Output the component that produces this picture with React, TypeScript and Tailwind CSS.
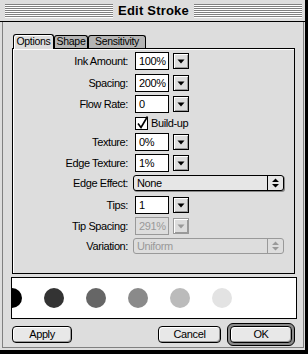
import React from 'react';

const labelFont = "font-['Liberation_Sans',Arial,sans-serif] text-[11px] tracking-[-0.4px] text-black";

const Stripes: React.FC = () => (
    <div className="flex flex-1 flex-col">
        {[0, 1, 2, 3, 4, 5, 6].map((i) => (
            <div key={i} className="h-[2px] border-b border-b-white bg-[#808080]" />
        ))}
    </div>
);

const DropButton: React.FC<{ disabled?: boolean }> = ({ disabled }) => (
    <div
        className={`ml-[4px] flex h-[16px] w-[16px] items-center justify-center border bg-[#dddddd] shadow-[inset_1px_1px_0_#fff,inset_-1px_-1px_0_#999] ${disabled ? 'border-[#999999]' : 'border-black'
            }`}
    >
        <svg width="8" height="5" viewBox="0 0 8 5">
            <path d="M0.5 0.5h7L4 4.5z" fill={disabled ? '#999999' : '#000000'} />
        </svg>
    </div>
);

const Field: React.FC<{ value: string; disabled?: boolean }> = ({ value, disabled }) => (
    <div
        className={`flex h-[18px] w-[34px] items-center border pl-[3px] ${disabled ? 'border-[#999999] bg-[#dddddd] text-[#999999]' : 'border-black bg-white text-black'
            }`}
    >
        {value}
    </div>
);

const Popup: React.FC<{ value: string; disabled?: boolean }> = ({ value, disabled }) => (
    <div
        className={`-ml-[2px] flex h-[16px] w-[151px] items-center rounded-[3px] border ${disabled ? 'border-[#999999] text-[#999999]' : 'border-black bg-[#e6e6e6] text-black shadow-[1px_1px_0_#888]'
            }`}
    >
        <span className="flex-1 pl-[3px]">{value}</span>
        <div
            className={`flex h-full w-[16px] items-center justify-center border-l ${disabled ? 'border-[#999999]' : 'border-black'
                }`}
        >
            <svg width="7" height="10" viewBox="0 0 7 10">
                <path d="M0 4h7L3.5 0.5zM0 6h7L3.5 9.5z" fill={disabled ? '#999999' : '#000000'} />
            </svg>
        </div>
    </div>
);

const Row: React.FC<{ label: string; className: string; children: React.ReactNode }> = ({ label, className, children }) => (
    <div className={`flex items-center ${className}`}>
        <div className="w-[115px] text-right">{label}</div>
        <div className="ml-[7px] flex items-center">{children}</div>
    </div>
);

const PushButton: React.FC<{ label: string; className: string }> = ({ label, className }) => (
    <div
        className={`flex h-[17px] items-center justify-center rounded-[4px] border border-black bg-[#e8e8e8] shadow-[inset_1px_1px_0_#fff,inset_-1px_-1px_0_#9a9a9a] ${className}`}
    >
        {label}
    </div>
);

const App: React.FC = () => {
    const dots = ['bg-black', 'bg-[#333333]', 'bg-[#666666]', 'bg-[#8a8a8a]', 'bg-[#bbbbbb]', 'bg-[#e3e3e3]'];

    return (
        <div className={`h-[354px] w-[308px] bg-black ${labelFont}`}>
            <div className="flex h-[350px] w-[305px] flex-col bg-[#dddddd]">
                {/* title bar */}
                <div className="flex h-[22px] items-start border-b border-black pl-[5px] pr-[3px] pt-[4px]">
                    <Stripes />
                    <div className="-mt-[3px] px-[5px] text-[13px] font-bold tracking-[0.2px]">Edit Stroke</div>
                    <Stripes />
                </div>

                {/* body */}
                <div className="ml-[2px] flex h-[326px] w-[302px] flex-col border-x border-b border-[#808080]">
                    {/* tabs */}
                    <div className="relative z-10 ml-[10px] mt-[12px] flex h-[15px] items-start text-[10.5px] tracking-[-0.3px]">
                        <div className="flex h-[15px] w-[41px] items-center justify-center rounded-t-[3px] border border-b-0 border-black bg-[#dddddd] shadow-[inset_1px_1px_0_#fff]">
                            Options
                        </div>
                        <div className="mt-[1px] flex h-[13px] w-[34px] items-center justify-center rounded-t-[3px] border border-b-0 border-black bg-[#b4b4b4]">
                            Shape
                        </div>
                        <div className="mt-[1px] flex h-[13px] w-[58px] items-center justify-center rounded-t-[3px] border border-b-0 border-black bg-[#b4b4b4]">
                            Sensitivity
                        </div>
                    </div>

                    {/* options panel */}
                    <div className="-mt-[1px] ml-[9px] flex h-[226px] w-[283px] flex-col border border-black shadow-[inset_1px_1px_0_#fff]">
                        <Row label="Ink Amount:" className="mt-[3px] h-[18px]">
                            <Field value="100%" />
                            <DropButton />
                        </Row>
                        <Row label="Spacing:" className="mt-[4px] h-[18px]">
                            <Field value="200%" />
                            <DropButton />
                        </Row>
                        <Row label="Flow Rate:" className="mt-[3px] h-[18px]">
                            <Field value="0" />
                            <DropButton />
                        </Row>
                        <Row label="" className="mt-[4px] h-[13px]">
                            <div className="relative h-[13px] w-[13px] border border-black bg-white">
                                <svg className="absolute -top-[2px] left-0" width="13" height="14" viewBox="0 0 13 14">
                                    <path d="M2 7.5L5 11.5L11.5 0.5" stroke="#000" strokeWidth="1.6" fill="none" />
                                </svg>
                            </div>
                            <span className="ml-[3px]">Build-up</span>
                        </Row>
                        <Row label="Texture:" className="mt-[3px] h-[18px]">
                            <Field value="0%" />
                            <DropButton />
                        </Row>
                        <Row label="Edge Texture:" className="mt-[3px] h-[18px]">
                            <Field value="1%" />
                            <DropButton />
                        </Row>
                        <Row label="Edge Effect:" className="mt-[3px] h-[16px]">
                            <Popup value="None" />
                        </Row>
                        <Row label="Tips:" className="mt-[5px] h-[18px]">
                            <Field value="1" />
                            <DropButton />
                        </Row>
                        <Row label="Tip Spacing:" className="mt-[3px] h-[18px]">
                            <Field value="291%" disabled />
                            <DropButton disabled />
                        </Row>
                        <Row label="Variation:" className="mt-[3px] h-[16px]">
                            <Popup value="Uniform" disabled />
                        </Row>
                    </div>

                    {/* preview */}
                    <div className="ml-[8px] mt-[3px] flex h-[42px] w-[286px] items-center gap-[22px] overflow-hidden border border-black bg-white">
                        {dots.map((c, i) => (
                            <div key={i} className={`h-[20px] w-[20px] shrink-0 rounded-full ${c} ${i === 0 ? '-ml-[10px]' : ''}`} />
                        ))}
                    </div>

                    {/* buttons */}
                    <div className="ml-[9px] mt-[3px] flex h-[25px] items-center">
                        <PushButton label="Apply" className="w-[60px]" />
                        <PushButton label="Cancel" className="ml-[86px] w-[63px]" />
                        <div className="ml-[6px] rounded-[6px] border border-black bg-[#8a8a8a] p-[2px]">
                            <PushButton label="OK" className="w-[62px]" />
                        </div>
                    </div>
                </div>
            </div>
        </div>
    );
};

export default App;
